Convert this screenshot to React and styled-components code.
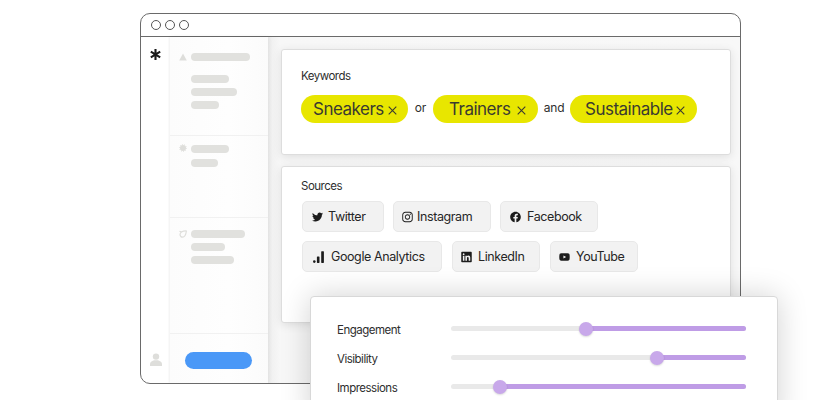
import React from "react";
import styled, { createGlobalStyle } from "styled-components";
import { FaTwitter, FaInstagram, FaFacebook, FaLinkedin, FaYoutube } from "react-icons/fa";

const Global = createGlobalStyle`
  html, body { margin: 0; padding: 0; background: #fff; }
  body { font-family: Inter, "Liberation Sans", sans-serif; color: #2e2e2e; -webkit-font-smoothing: antialiased; }
`;

const Page = styled.div`
  position: relative;
  width: 840px;
  height: 400px;
  overflow: hidden;
  padding: 13px 0 0 140px;
  box-sizing: border-box;
`;
const Window = styled.div`
  width: 601px;
  height: 371px;
  box-sizing: border-box;
  border: 1px solid #6a6a6a;
  border-radius: 10px;
  display: flex;
  flex-direction: column;
  overflow: hidden;
  background: #fff;
`;
const TitleBar = styled.div`
  height: 22px;
  flex: none;
  display: flex;
  align-items: center;
  gap: 4px;
  padding-left: 10px;
  border-bottom: 1px solid #6a6a6a;
`;
const Light = styled.span`
  width: 8px;
  height: 8px;
  border: 1px solid #555;
  border-radius: 50%;
`;
const Body = styled.div`
  flex: 1;
  display: flex;
  min-height: 0;
`;
const Rail = styled.div`
  width: 29px;
  flex: none;
  display: flex;
  flex-direction: column;
  align-items: center;
  justify-content: space-between;
  padding: 12px 0 17px;
  box-sizing: border-box;
`;
const Sidebar = styled.div`
  width: 98px;
  flex: none;
  display: flex;
  flex-direction: column;
  background: linear-gradient(90deg, #fcfcfc, #fefefe 60%, #fbfbfb);
  box-shadow: -1px 0 2px rgba(0,0,0,.04), 1px 0 4px rgba(0,0,0,.07);
  position: relative;
`;
const Section = styled.div`
  height: ${(p) => p.$h}px;
  flex: none;
  box-sizing: border-box;
  padding: ${(p) => p.$top}px 0 0 9px;
  border-bottom: 1px solid #f1f1f1;
  display: grid;
  grid-template-columns: 7px 1fr;
  column-gap: 5px;
  align-content: start;
`;
const SideIcon = styled.svg`
  width: 8px;
  height: 8px;
  color: #dededb;
  display: block;
  margin-top: ${(p) => p.$dy || 0}px;
`;
const Stack = styled.div`
  display: flex;
  flex-direction: column;
  gap: ${(p) => p.$gap || 5}px;
  align-items: flex-start;
`;
const Skeleton = styled.div`
  height: 8px;
  border-radius: 4px;
  background: #e1e1de;
  width: ${(p) => p.$w}px;
  margin-bottom: ${(p) => p.$mb || 0}px;
`;
const Footer = styled.div`
  flex: 1;
  display: flex;
  padding: 18px 0 0 15px;
`;
const BlueButton = styled.div`
  width: 67px;
  height: 17px;
  border-radius: 9px;
  background: #4a98f7;
`;
const Main = styled.div`
  flex: 1;
  box-sizing: border-box;
  padding: 12px 9px 0 13px;
  display: flex;
  flex-direction: column;
  gap: 11px;
  background: linear-gradient(90deg, #eeeeee 0, #f7f7f7 12px, #f8f8f8 100%);
`;
const Card = styled.div`
  height: ${(p) => p.$h}px;
  flex: none;
  box-sizing: border-box;
  background: #fff;
  border: 1px solid #dddddd;
  border-radius: 3px;
  box-shadow: 0 2px 10px rgba(0,0,0,.1);
  padding: ${(p) => p.$top}px 0 0 19px;
`;
const Label = styled.div`
  font-size: 11.5px;
  letter-spacing: -0.5px;
  line-height: 16px;
  color: #2e2e2e;
`;
const PillRow = styled.div`
  display: flex;
  align-items: center;
  margin-top: 11px;
`;
const Pill = styled.div`
  height: 28px;
  width: ${(p) => p.$w}px;
  box-sizing: border-box;
  border-radius: 14px;
  background: #e8e600;
  display: flex;
  align-items: center;
  justify-content: space-between;
  padding: 0 ${(p) => p.$pr}px 0 ${(p) => p.$pl}px;
  font-size: 17px;
  letter-spacing: -0.5px;
  color: #3a3a30;
`;
const Close = styled.svg`
  width: 9px;
  height: 9px;
  margin-top: 2px;
  flex: none;
`;
const Joiner = styled.span`
  font-size: 12px;
  letter-spacing: -0.2px;
  width: ${(p) => p.$w}px;
  text-align: center;
  margin-top: -3px;
  color: #2e2e2e;
`;
const ChipGrid = styled.div`
  display: flex;
  flex-direction: column;
  gap: 9px;
  margin: 7px 0 0 1px;
`;
const ChipRow = styled.div`
  display: flex;
  gap: ${(p) => p.$gap}px;
`;
const Chip = styled.div`
  width: ${(p) => p.$w}px;
  height: 31px;
  box-sizing: border-box;
  display: flex;
  align-items: center;
  gap: ${(p) => p.$gap}px;
  padding-left: ${(p) => p.$pl}px;
  background: #f2f2f2;
  border: 1px solid #e8e8e8;
  border-radius: 5px;
  font-size: 12.5px;
  letter-spacing: -0.4px;
  color: #262626;
  svg { width: 11px; height: 12px; flex: none; color: #1c1c1c; }
`;
const Panel = styled.div`
  position: absolute;
  left: 310px;
  top: 296px;
  width: 468px;
  height: 130px;
  box-sizing: border-box;
  background: #fff;
  border: 1px solid #d8d8d8;
  border-radius: 4px;
  box-shadow: 0 0 30px rgba(0,0,0,.18);
  padding: 23px 31px 0 26px;
  display: flex;
  flex-direction: column;
  gap: 12px;
`;
const SliderRow = styled.div`
  height: 17px;
  display: grid;
  grid-template-columns: 114px 1fr;
  align-items: center;
`;
const SliderLabel = styled.div`
  font-size: 11.5px;
  letter-spacing: -0.5px;
  margin-top: 3px;
  color: #2e2e2e;
`;
const Track = styled.div`
  position: relative;
  height: 5px;
  border-radius: 3px;
  background: #e9e9e9;
`;
const Fill = styled.div`
  position: absolute;
  right: 0;
  top: 0;
  bottom: 0;
  background: #bf9ce6;
  border-radius: 3px;
`;
const Thumb = styled.div`
  position: absolute;
  top: -4.5px;
  width: 14px;
  height: 14px;
  margin-left: -7px;
  border-radius: 50%;
  background: #c8a8ea;
  box-shadow: 0 1px 2px rgba(0,0,0,.15);
`;

const X = () => (
  <Close viewBox="0 0 9 9" fill="none" stroke="#3a3a30" strokeWidth="1.1">
    <path d="M.7.7l7.6 7.6M8.3.7L.7 8.3" />
  </Close>
);

const Analytics = () => (
  <svg viewBox="0 0 11 12" fill="currentColor">
    <circle cx="1.3" cy="10.6" r="1.3" />
    <rect x="3.9" y="5.5" width="2.6" height="6.4" rx=".6" />
    <rect x="8.2" y="0.2" width="2.7" height="11.7" rx=".6" />
  </svg>
);

const sliders = [
  ["Engagement", 45.8],
  ["Visibility", 69.8],
  ["Impressions", 16.6],
];

export default function App() {
  return (
    <Page>
      <Global />
      <Window>
        <TitleBar>
          <Light />
          <Light />
          <Light />
        </TitleBar>
        <Body>
          <Rail>
            <svg width="11" height="11" viewBox="0 0 11 11" stroke="#1a1a1a" strokeWidth="2.1">
              <path d="M5.5 0v11M.8 2.7l9.4 5.6M10.2 2.7L.8 8.3" />
            </svg>
            <svg width="12" height="13" viewBox="0 0 12 13" fill="#dededb">
              <circle cx="6" cy="3.6" r="3.2" />
              <path d="M0 13v-2.2C0 8.8 2.5 7.6 4.2 7.2h3.6C9.5 7.6 12 8.8 12 10.8V13z" />
            </svg>
          </Rail>
          <Sidebar>
            <Section $h={99} $top={16}>
              <SideIcon viewBox="0 0 8 8" fill="currentColor">
                <path d="M4 .5L7.8 7.5H.2z" />
              </SideIcon>
              <Stack>
                <Skeleton $w={59} $mb={9} />
                <Skeleton $w={38} />
                <Skeleton $w={46} />
                <Skeleton $w={28} />
              </Stack>
            </Section>
            <Section $h={82} $top={9}>
              <SideIcon viewBox="0 0 8 8" $dy={-1}>
                <circle cx="4" cy="4" r="3" fill="currentColor" />
                <circle cx="4" cy="4" r="3.4" fill="none" stroke="currentColor" strokeWidth="1" strokeDasharray="1 1.1" />
              </SideIcon>
              <Stack $gap={6}>
                <Skeleton $w={38} />
                <Skeleton $w={27} />
              </Stack>
            </Section>
            <Section $h={116} $top={12}>
              <SideIcon viewBox="0 0 8 8" fill="none" stroke="currentColor" strokeWidth="1.2">
                <path d="M7.4 1C4 .8 1 1.8 1 4.6c0 1.6 1.2 2.6 2.6 2.6C6 7.2 7 4 7.4 1zM.4 1.2l2.2.7" />
              </SideIcon>
              <Stack>
                <Skeleton $w={54} />
                <Skeleton $w={34} />
                <Skeleton $w={43} />
              </Stack>
            </Section>
            <Footer>
              <BlueButton />
            </Footer>
          </Sidebar>
          <Main>
            <Card $h={106} $top={18}>
              <Label>Keywords</Label>
              <PillRow>
                <Pill $w={107} $pl={12} $pr={11}>Sneakers <X /></Pill>
                <Joiner $w={25}>or</Joiner>
                <Pill $w={105} $pl={16} $pr={12}>Trainers <X /></Pill>
                <Joiner $w={32}>and</Joiner>
                <Pill $w={127} $pl={15} $pr={12}>Sustainable<X /></Pill>
              </PillRow>
            </Card>
            <Card $h={157} $top={11}>
              <Label>Sources</Label>
              <ChipGrid>
                <ChipRow $gap={9}>
                  <Chip $w={82} $pl={9} $gap={5}><FaTwitter />Twitter</Chip>
                  <Chip $w={98} $pl={8} $gap={4}><FaInstagram />Instagram</Chip>
                  <Chip $w={98} $pl={9} $gap={6}><FaFacebook />Facebook</Chip>
                </ChipRow>
                <ChipRow $gap={10}>
                  <Chip $w={140} $pl={10} $gap={7}><Analytics />Google Analytics</Chip>
                  <Chip $w={88} $pl={8} $gap={6}><FaLinkedin />LinkedIn</Chip>
                  <Chip $w={88} $pl={8} $gap={6}><FaYoutube />YouTube</Chip>
                </ChipRow>
              </ChipGrid>
            </Card>
          </Main>
        </Body>
      </Window>
      <Panel>
        {sliders.map(([name, v]) => (
          <SliderRow key={name}>
            <SliderLabel>{name}</SliderLabel>
            <Track>
              <Fill style={{ left: `${v}%` }} />
              <Thumb style={{ left: `${v}%` }} />
            </Track>
          </SliderRow>
        ))}
      </Panel>
    </Page>
  );
}
